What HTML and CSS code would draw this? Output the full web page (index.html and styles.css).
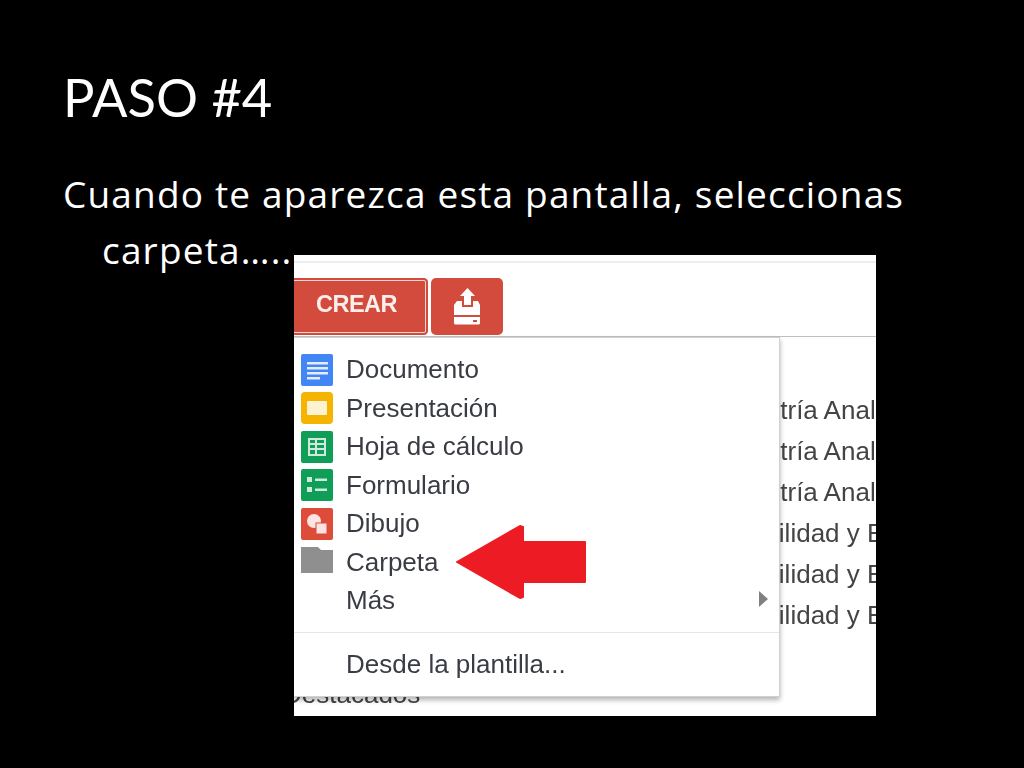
FILE: index.html
```html
<!DOCTYPE html>
<html lang="es">
<head>
<meta charset="utf-8">
<title>PASO #4</title>
<link rel="stylesheet" href="styles.css">
</head>
<body>
<main class="slide">
  <h1 class="title">PASO #4</h1>
  <p class="lead">Cuando te aparezca esta pantalla, seleccionas carpeta…..</p>
  <section class="shot">
    <div class="topline"></div>
    <div class="toolbar">
      <div class="crear">CREAR</div>
      <div class="upload">
        <svg width="28" height="37" viewBox="0 0 28 37"><path fill="#fff" d="M14.500 0 22 8h-4v9h-7V8H7zM4 13h5v6h11v-6h5l2 4v10H1V17zM1 29h26v6a1.500 1.500 0 0 1-1.500 1.500h-23A1.500 1.500 0 0 1 1 35z"/><rect x="20" y="32" width="4" height="2" fill="#d24b3c"/></svg>
      </div>
    </div>
    <div class="behind">
      <div class="bgrow">Geometría Analítica</div>
      <div class="bgrow">Geometría Analítica</div>
      <div class="bgrow">Geometría Analítica</div>
      <div class="bgrow">Probabilidad y Estadística</div>
      <div class="bgrow">Probabilidad y Estadística</div>
      <div class="bgrow">Probabilidad y Estadística</div>
    </div>
    <div class="starred">Destacados</div>
    <nav class="menu">
      <div class="item">
        <svg class="ico" viewBox="0 0 32 32"><rect width="32" height="32" rx="2" fill="#4285f4"/><path fill="#e3ecfd" d="M6 8h21v2.500H6zM6 13h21v2.500H6zM6 18h21v2.500H6zM6 23h13v2.500H6z"/></svg>
        <span>Documento</span>
      </div>
      <div class="item">
        <svg class="ico" viewBox="0 0 32 32"><rect width="32" height="32" rx="4" fill="#f4b400"/><rect x="6" y="9" width="20" height="14" rx="1" fill="#fdf3d3"/></svg>
        <span>Presentación</span>
      </div>
      <div class="item">
        <svg class="ico" viewBox="0 0 32 32"><rect width="32" height="32" rx="2" fill="#0f9d58"/><path fill="#cfeadc" d="M7 7h18v18H7zm2 2v3h5V9zm7 0v3h7V9zm-7 5v3h5v-3zm7 0v3h7v-3zm-7 5v4h5v-4zm7 0v4h7v-4z" fill-rule="evenodd"/></svg>
        <span>Hoja de cálculo</span>
      </div>
      <div class="item">
        <svg class="ico" viewBox="0 0 32 32"><rect width="32" height="32" rx="2" fill="#0f9d58"/><path fill="#cfeadc" d="M6 8h5v5H6zM14 9.500h12V12H14zM6 18h5v5H6zM14 19.500h12V22H14z"/></svg>
        <span>Formulario</span>
      </div>
      <div class="item">
        <svg class="ico" viewBox="0 0 32 32"><rect width="32" height="32" rx="2" fill="#dd4b39"/><circle cx="13" cy="13" r="7" fill="#fbe4e1"/><rect x="15" y="15" width="11" height="11" fill="#fbe4e1" stroke="#dd4b39"/></svg>
        <span>Dibujo</span>
      </div>
      <div class="item">
        <svg class="ico" viewBox="0 0 32 32"><path fill="#8f8f8f" d="M0 1h17l3 3h12v23H0z"/></svg>
        <span>Carpeta</span>
      </div>
      <div class="item more">
        <span class="ico"></span>
        <span>Más</span>
        <span class="caret"></span>
      </div>
      <div class="sep"></div>
      <div class="item">
        <span class="ico"></span>
        <span>Desde la plantilla...</span>
      </div>
    </nav>
    <svg class="arrow" width="132" height="76" viewBox="0 0 132 76"><path fill="#ed1c24" stroke="#ed1c24" stroke-width="2" stroke-linejoin="round" d="M2 38 65 2l3 1v15h62v40H68v15l-3 1z"/></svg>
  </section>
</main>
</body>
</html>
```
FILE: styles.css
```css
* { box-sizing: border-box; }
html, body { margin: 0; padding: 0; background: #000; }
.slide {
  position: relative;
  width: 1024px;
  height: 768px;
  overflow: hidden;
  background: #000;
  color: #fff;
  font-family: Lato, "Open Sans", sans-serif;
  padding: 62px 63px 0;
}
.title {
  margin: 0;
  font-size: 52.500px;
  font-weight: 400;
  line-height: 70px;
}
.lead {
  margin: 34px 0 0;
  padding-left: 39px;
  text-indent: -39px;
  font-family: "Open Sans", Lato, sans-serif;
  font-size: 37px;
  letter-spacing: 1.170px;
  line-height: 56px;
}
.shot {
  position: absolute;
  left: 294px;
  top: 255px;
  width: 582px;
  height: 461px;
  overflow: hidden;
  background: #fff;
  color: #3c3c3c;
  font-family: "Liberation Sans", Arial, sans-serif;
  display: flex;
  flex-direction: column;
  filter: blur(0.35px);
}
.topline { height: 2px; margin-top: 6px; background: #eee; }
.toolbar {
  display: flex;
  gap: 3px;
  margin-top: 15px;
  height: 59px;
  border-bottom: 1px solid #c0c0c0;
  padding-bottom: 1px;
}
.crear {
  width: 137px;
  margin-left: -3px;
  background: #d24b3c;
  border: 1px solid #d24b3c;
  outline: 1px solid #f3d6d2;
  outline-offset: -3px;
  border-radius: 0 4px 4px 0;
  color: #fbeeec;
  font-weight: 700;
  font-size: 23.500px;
  letter-spacing: -0.5px;
  display: flex;
  align-items: center;
  justify-content: center;
  padding: 0 6px 4px 0;
}
.upload {
  width: 72px;
  background: #d24b3c;
  border-radius: 5px;
  display: flex;
  align-items: center;
  justify-content: center;
}
.behind {
  margin-top: 53px;
  padding-left: 401px;
  font-size: 26px;
  color: #444;
  white-space: nowrap;
}
.bgrow { height: 41px; line-height: 41px; }
.starred {
  position: absolute;
  left: -11px;
  top: 424px;
  font-size: 26px;
  color: #444;
}
.menu {
  position: absolute;
  left: 0;
  top: 82px;
  width: 486px;
  height: 360px;
  background: #fff;
  border: 1px solid #d0d0d0;
  border-left: 0;
  box-shadow: 0 3px 5px rgba(0, 0, 0, .3);
  padding-top: 12.500px;
}
.item {
  display: flex;
  align-items: center;
  gap: 13px;
  height: 38.500px;
  padding-left: 7px;
  font-size: 26px;
  color: #3a3c44;
  white-space: nowrap;
}
.ico { width: 32px; height: 32px; flex: none; display: block; }
.more { position: relative; }
.caret {
  position: absolute;
  right: 11px;
  top: 9px;
  border-left: 9px solid #808080;
  border-top: 8px solid transparent;
  border-bottom: 8px solid transparent;
}
.sep { height: 1px; background: #e6e6e6; margin: 12px 0; }
.arrow { position: absolute; left: 161px; top: 269px; }
```
